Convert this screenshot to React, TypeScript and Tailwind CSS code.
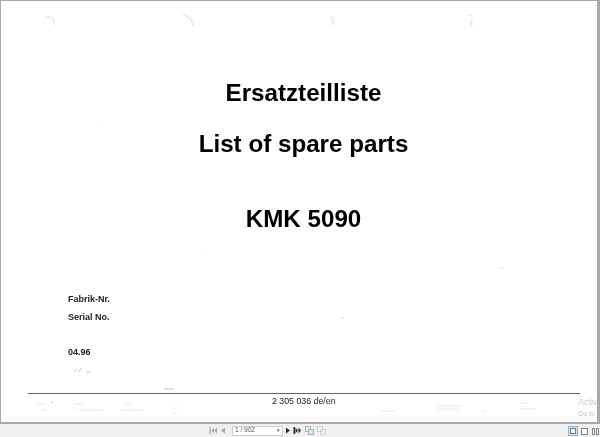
function First() {
  return (
    <svg width="9" height="9" viewBox="0 0 9 9" fill="#a4a8ad">
      <rect x="0.500" y="1" width="1.200" height="7" />
      <path d="M2.500 4.500 5 1.500v6zM5.500 4.500 8 1.500v6z" />
    </svg>
  );
}

function Prev() {
  return (
    <svg width="6" height="9" viewBox="0 0 6 9" fill="#a4a8ad">
      <path d="M1 4.500 5 1.500v6z" />
    </svg>
  );
}

function Next() {
  return (
    <svg width="6" height="9" viewBox="0 0 6 9" fill="#2a2e33">
      <path d="M5 4.500 1 1.500v6z" />
    </svg>
  );
}

function Last() {
  return (
    <svg width="9" height="9" viewBox="0 0 9 9" fill="#2a2e33">
      <rect x="0.500" y="1" width="1.500" height="7" />
      <path d="M2.500 1.500v6l2.500-3zM5.500 1.500v6l2.500-3z" />
    </svg>
  );
}

function Specks() {
  return (
    <svg className="absolute inset-0" width="597" height="422" viewBox="0 0 597 422" fill="none">
      <g stroke="#c4c4c4" strokeWidth="0.6">
        <path d="M44 16q5-1 8 2l2 6" />
        <path d="M182 14q5 1 8 4l2 7" />
        <path d="M330 15l2 2v7" />
        <path d="M468 14l4 2M470 19l1 6" />
        <path d="M100 126h1M200 252h1M500 267h3M340 317h3" />
      </g>
      <g stroke="#dcdcdc" strokeWidth="0.7">
        <path d="M37 403h7M40 409h4M73 403h9M74 409h2M78 409h24M124 403h6M120 409h22M172 407h5M172 412h2" />
        <path d="M436 405h24M437 408h20M380 410h14M480 410h4M519 402h8M520 408h14" />
      </g>
      <g stroke="#aaaaaa" strokeWidth="0.7">
        <path d="M51 400v2M163 388h10M73 371l3-3M78 371l2-4M85 371h4" />
      </g>
    </svg>
  );
}

export default function App() {
  return (
    <div className="flex h-[437px] w-[600px] flex-col bg-[#a9a9a9] font-['Liberation_Sans',Arial,sans-serif]">
      <div className="flex min-h-0 flex-1 pb-[2px] pl-[1px] pr-[3px] pt-[1px]">
        <section className="relative flex flex-1 flex-col overflow-hidden bg-white">
          <Specks />

          <div className="relative flex flex-col items-center text-black blur-[0.3px]">
            <h1 className="ml-[9px] mt-[78px] text-[24.2px] font-bold leading-[28px]">Ersatzteilliste</h1>
            <h2 className="ml-[9px] mt-[23px] text-[24.2px] font-bold leading-[28px]">List of spare parts</h2>
            <h2 className="ml-[9px] mt-[47px] text-[24.2px] font-bold leading-[28px]">KMK 5090</h2>
          </div>

          <div className="relative ml-[67px] mt-[60px] flex flex-col text-[9px] font-bold leading-[12px] text-[#222] blur-[0.3px]">
            <p>Fabrik-Nr.</p>
            <p className="mt-[6px]">Serial No.</p>
            <p className="mt-[23px]">04.96</p>
          </div>

          <div className="relative ml-[27px] mr-[17px] mt-[35px] h-[1px] bg-[#666]" />

          <p className="relative ml-[271px] mt-[1px] text-[8.800px] leading-[12px] text-[#222] blur-[0.3px]">2 305 036 de/en</p>

          <div className="absolute left-[577px] top-[395px] w-[20px] text-[#c9c9c9]">
            <p className="text-[9px] leading-[13px]">Activ</p>
            <p className="text-[7px] leading-[9px]">Go to</p>
          </div>
        </section>
      </div>

      <footer className="relative flex h-[13px] shrink-0 items-center bg-[#f0f0f0] pl-[209px]">
        <div className="flex items-center gap-[2px]">
          <First />
          <Prev />
          <div className="ml-[4px] flex h-[10px] w-[51px] items-center justify-between border border-[#d0d0d0] bg-white px-[2px] text-[6.500px] leading-none text-[#555]">
            <span>1 / 902</span>
            <span className="text-[5px]">▾</span>
          </div>
          <Next />
          <Last />
          <svg className="ml-[1px]" width="9" height="9" viewBox="0 0 9 9" fill="none" stroke="#9fb2be" strokeWidth="1">
            <rect x="0.500" y="0.500" width="5" height="5" />
            <rect x="3.500" y="3.500" width="5" height="5" fill="#dfe8ee" />
          </svg>
          <svg className="ml-[1px]" width="9" height="9" viewBox="0 0 9 9" fill="none" stroke="#d0d4d7" strokeWidth="1">
            <rect x="0.500" y="0.500" width="5" height="5" />
            <rect x="3.500" y="3.500" width="5" height="5" />
          </svg>
        </div>

        <div className="absolute right-0 top-[2px] flex items-center gap-[1px]">
          <span className="flex h-[10px] w-[10px] items-center justify-center border border-[#8fb4d4] bg-[#cfe2f2]">
            <span className="h-[6px] w-[6px] border border-[#6c7a86] bg-white" />
          </span>
          <span className="flex h-[10px] w-[10px] items-center justify-center">
            <span className="h-[7px] w-[7px] border border-[#7d858c] bg-white" />
          </span>
          <span className="flex h-[10px] w-[10px] items-center justify-center gap-[1px]">
            <span className="h-[7px] w-[3px] border border-[#7d858c] bg-white" />
            <span className="h-[7px] w-[3px] border border-[#7d858c] bg-white" />
          </span>
        </div>
      </footer>
    </div>
  );
}
